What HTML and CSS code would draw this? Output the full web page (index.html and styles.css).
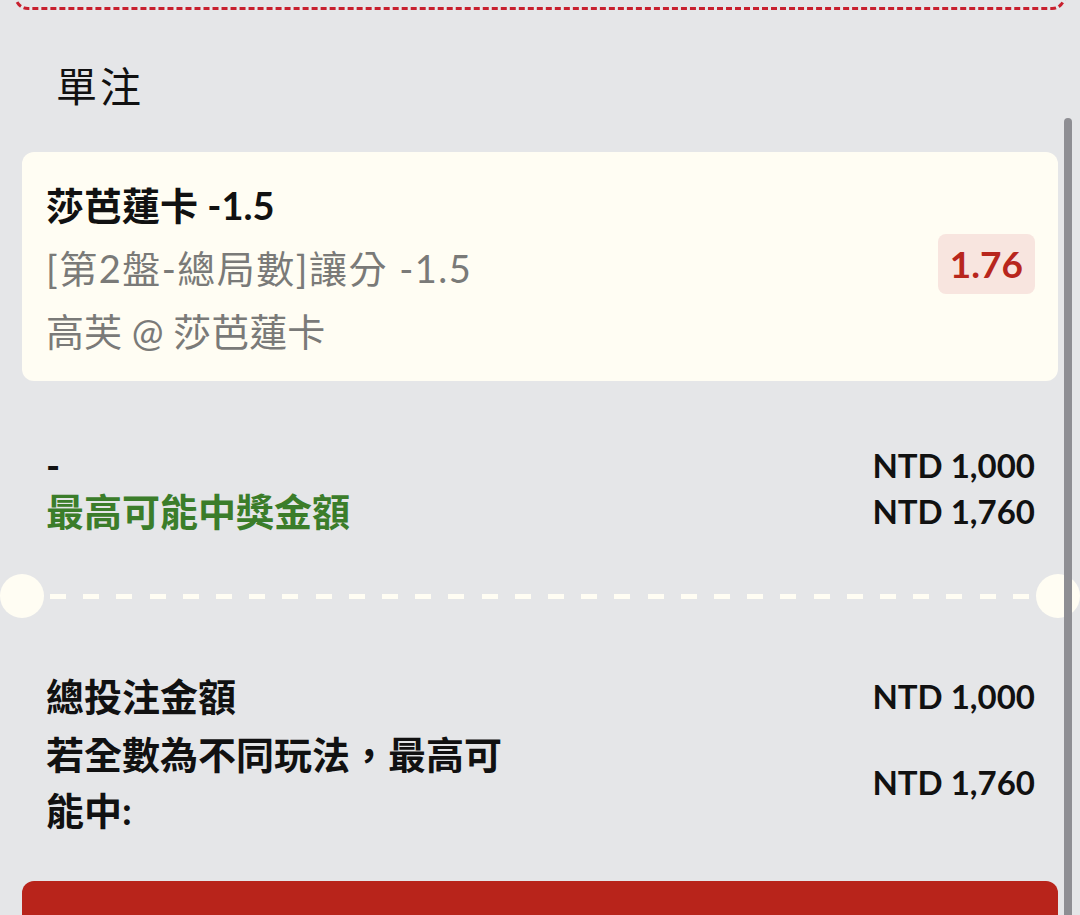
FILE: index.html
```html
<!DOCTYPE html>
<html lang="zh-Hant">
<head>
<meta charset="utf-8">
<title>單注</title>
<link rel="stylesheet" href="styles.css">
</head>
<body>
<div class="page">
  <div class="top-box"></div>
  <h2 class="section-title">單注</h2>
  <div class="content">
    <div class="bet-card">
      <div class="bet-info">
        <div class="bet-name">莎芭蓮卡 -1.5</div>
        <div class="bet-line market">[第2盤-總局數]讓分 -1.5</div>
        <div class="bet-line">高芙 @ 莎芭蓮卡</div>
      </div>
      <div class="odds">1.76</div>
    </div>

    <div class="stake">
      <div class="row">
        <div class="label">-</div>
        <div class="amount">NTD 1,000</div>
      </div>
      <div class="row">
        <div class="label green">最高可能中獎金額</div>
        <div class="amount">NTD 1,760</div>
      </div>
    </div>

    <div class="divider">
      <span class="notch"></span>
      <span class="dashes"></span>
      <span class="notch"></span>
    </div>

    <div class="summary">
      <div class="row">
        <div class="label">總投注金額</div>
        <div class="amount">NTD 1,000</div>
      </div>
      <div class="row">
        <div class="label wrap">若全數為不同玩法，最高可能中:</div>
        <div class="amount">NTD 1,760</div>
      </div>
    </div>

    <div class="submit"></div>
  </div>
  <div class="scrollbar"></div>
</div>
</body>
</html>
```

FILE: styles.css
```css
html, body {
  margin: 0;
  padding: 0;
  height: 100%;
  overflow: hidden;
}

body {
  background: #e5e6e8;
  font-family: Lato, "Noto Sans CJK TC", sans-serif;
  color: #111;
}

.page {
  position: relative;
  height: 915px;
  overflow: hidden;
}

.top-box {
  height: 44px;
  margin: -37px 14px 0;
  border: 3px dashed #c8202e;
  border-top: none;
  border-radius: 0 0 14px 14px;
}

.section-title {
  margin: 49px 0 0 56px;
  font-size: 41px;
  font-weight: 400;
  line-height: 56px;
  letter-spacing: 3px;
  color: #111;
}

.content {
  margin: 37px 22px 0;
}

.bet-card {
  display: flex;
  align-items: center;
  justify-content: space-between;
  background: #fffdf3;
  border-radius: 12px;
  padding: 22px 23px 18px 24px;
}

.bet-info {
  display: flex;
  flex-direction: column;
}

.bet-name {
  font-size: 38px;
  font-weight: 700;
  line-height: 63px;
  color: #111;
}

.bet-line {
  font-size: 38px;
  font-weight: 400;
  line-height: 63px;
  color: #7a7a78;
}

.bet-line.market {
  letter-spacing: 1.5px;
}

.odds {
  background: #f8e5df;
  color: #b8261d;
  font-size: 37px;
  font-weight: 700;
  height: 60px;
  line-height: 60px;
  padding: 0 12px;
  border-radius: 8px;
  margin-bottom: 10px;
}

.stake {
  margin-top: 61px;
  padding: 0 23px 0 24px;
}

.row {
  display: flex;
  align-items: center;
  justify-content: space-between;
}

.stake .row {
  line-height: 46px;
}

.label {
  font-size: 38px;
  font-weight: 700;
  color: #111;
}

.label.green {
  color: #3b7d2a;
}

.amount {
  font-size: 33px;
  font-weight: 700;
  color: #111;
}

.divider {
  display: flex;
  align-items: center;
  margin: 40px -22px 0;
  height: 44px;
}

.notch {
  width: 44px;
  height: 44px;
  border-radius: 50%;
  background: #fffdf3;
  flex: none;
}

.dashes {
  flex: 1;
  height: 5px;
  background-image: repeating-linear-gradient(
    to right,
    #fffdf3 0,
    #fffdf3 16px,
    transparent 16px,
    transparent 33.2px
  );
  background-position: 6px 0;
}

.summary {
  margin-top: 50px;
  padding: 0 23px 0 24px;
  display: flex;
  flex-direction: column;
  gap: 2px;
}

.summary .row {
  line-height: 56px;
}

.label.wrap {
  width: 480px;
}

.submit {
  margin-top: 43px;
  height: 120px;
  background: #b8241b;
  border-radius: 12px;
}

.scrollbar {
  position: absolute;
  top: 118px;
  right: 8px;
  width: 8px;
  bottom: 0;
  background: #8e8e93;
  border-radius: 4px 4px 0 0;
}
```
